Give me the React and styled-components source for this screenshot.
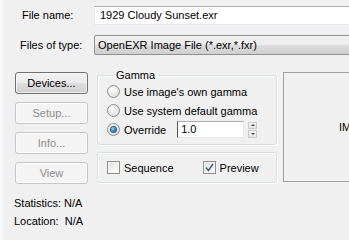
import React from 'react';
import styled, { createGlobalStyle } from 'styled-components';

const GlobalStyle = createGlobalStyle`
  html, body {
    margin: 0;
    padding: 0;
    background: #f0f0f0;
  }
  body {
    font-family: "Liberation Sans", Arial, sans-serif;
    font-size: 11px;
    color: #000;
  }
`;

const Page = styled.div`
  width: 346px;
  height: 240px;
  overflow: hidden;
  background: #f0f0f0;
  border-left: 3px solid #f7f9fc;
  display: flex;
  flex-direction: column;
`;

const FieldGrid = styled.div`
  display: grid;
  grid-template-columns: 91px 280px;
  row-gap: 10px;
  padding-top: 6px;
  align-items: center;
`;

const Label = styled.label`
  padding-left: ${p => p.$indent}px;
  white-space: nowrap;
  line-height: 19px;
`;

const TextInput = styled.div`
  height: 17px;
  border: 1px solid #e3e9ef;
  border-top-color: #abadb3;
  background: #fff;
  padding-left: 5px;
  line-height: 17px;
  white-space: nowrap;
`;

const Combo = styled.div`
  height: 18px;
  border: 1px solid #8e8f8f;
  border-radius: 2px;
  background: linear-gradient(#f2f2f2 0%, #ebebeb 50%, #dddddd 51%, #cfcfcf 100%);
  padding-left: 3px;
  line-height: 18px;
  white-space: nowrap;
`;

const Middle = styled.div`
  display: flex;
  align-items: flex-start;
  margin-top: 14px;
  padding-left: 12px;
`;

const ButtonColumn = styled.div`
  display: flex;
  flex-direction: column;
  gap: 8px;
  margin-top: 3px;
  width: 73px;
  flex-shrink: 0;
`;

const Button = styled.div`
  height: 20px;
  box-sizing: content-box;
  border: 1px solid ${p => (p.$disabled ? '#c4c7c9' : '#707070')};
  border-radius: 3px;
  background: ${p =>
    p.$disabled
      ? '#f4f4f4'
      : 'linear-gradient(#f2f2f2 0%, #ebebeb 50%, #dddddd 51%, #cfcfcf 100%)'};
  color: ${p => (p.$disabled ? '#8d8d8d' : '#000')};
  display: flex;
  align-items: center;
  justify-content: center;
  box-shadow: inset 0 0 0 1px ${p => (p.$disabled ? '#fbfbfb' : 'rgba(255,255,255,0.6)')};
`;

const GroupColumn = styled.div`
  display: flex;
  flex-direction: column;
  gap: 7px;
  margin-left: 9px;
  width: 180px;
  flex-shrink: 0;
`;

const Group = styled.fieldset`
  margin: 0;
  border: 1px solid #d5dfe5;
  border-radius: 3px;
  box-shadow: inset 1px 1px 0 #fff, 1px 1px 0 #fff;
  padding: ${p => p.$pad};
  min-width: 0;
  display: flex;
  flex-direction: ${p => (p.$row ? 'row' : 'column')};
  gap: ${p => p.$gap || 0}px;
`;

const Legend = styled.legend`
  padding: 0 3px;
  margin-left: 6px;
  line-height: 13px;
`;

const OptionRow = styled.div`
  display: flex;
  align-items: center;
  height: 19px;
  gap: 4px;
  white-space: nowrap;
`;

const RadioDot = styled.span`
  width: 11px;
  height: 11px;
  border-radius: 50%;
  border: 1px solid #8e8f8f;
  background: radial-gradient(circle at 40% 35%, #ffffff 0%, #e8e8e8 55%, #d0d0d0 100%);
  display: flex;
  align-items: center;
  justify-content: center;
  flex-shrink: 0;

  &::after {
    content: '';
    display: ${p => (p.$checked ? 'block' : 'none')};
    width: 5px;
    height: 5px;
    border-radius: 50%;
    background: radial-gradient(circle at 35% 35%, #8fd2f5 0%, #1f6aa0 70%, #0e3f70 100%);
    box-shadow: 0 0 0 1px #2a5b86;
  }
`;

const Check = styled.span`
  width: 11px;
  height: 11px;
  border: 1px solid #8e8f8f;
  background: linear-gradient(135deg, #dcdcdc 0%, #f4f4f4 60%, #ffffff 100%);
  box-shadow: inset 0 0 0 1px #f4f4f4;
  display: flex;
  align-items: center;
  justify-content: center;
  flex-shrink: 0;
`;

const OverrideInput = styled.div`
  width: 62px;
  height: 15px;
  margin-left: 7px;
  border: 1px solid #e3e9ef;
  border-top-color: #abadb3;
  border-left-color: #555;
  background: #fff;
  padding-left: 3px;
  line-height: 15px;
`;

const Spinner = styled.div`
  width: 9px;
  height: 16px;
  display: flex;
  flex-direction: column;
  gap: 1px;
`;

const SpinHalf = styled.div`
  flex: 1;
  border: 1px solid #c9cbcd;
  background: linear-gradient(#f8f8f8, #e3e3e3);
  display: flex;
  align-items: center;
  justify-content: center;

  &::after {
    content: '';
    border-left: 2px solid transparent;
    border-right: 2px solid transparent;
    ${p => (p.$up ? 'border-bottom' : 'border-top')}: 2px solid #444;
  }
`;

const PreviewPanel = styled.div`
  margin-left: 6px;
  margin-top: 3px;
  width: 80px;
  height: 108px;
  flex-shrink: 0;
  border: 1px solid #a0a0a0;
  display: flex;
  align-items: center;
  padding-left: 55px;
  white-space: nowrap;
`;

const Stats = styled.div`
  display: flex;
  flex-direction: column;
  gap: 5px;
  margin-top: 13px;
  padding-left: 11px;
  line-height: 13px;
`;

function Radio({ checked, children }) {
  return (
    <OptionRow>
      <RadioDot $checked={checked} />
      {children}
    </OptionRow>
  );
}

function CheckBox({ checked, children }) {
  return (
    <OptionRow>
      <Check>
        {checked && (
          <svg width="9" height="9" viewBox="0 0 9 9">
            <path d="M1 4.5 L3.5 7.5 L8 1" fill="none" stroke="#4a5f97" strokeWidth="1.6" />
          </svg>
        )}
      </Check>
      {children}
    </OptionRow>
  );
}

export default function App() {
  return (
    <Page>
      <GlobalStyle />
      <FieldGrid>
        <Label $indent={19}>File name:</Label>
        <TextInput>1929 Cloudy Sunset.exr</TextInput>
        <Label $indent={17}>Files of type:</Label>
        <Combo>OpenEXR Image File (*.exr,*.fxr)</Combo>
      </FieldGrid>

      <Middle>
        <ButtonColumn>
          <Button>Devices...</Button>
          <Button $disabled>Setup...</Button>
          <Button $disabled>Info...</Button>
          <Button $disabled>View</Button>
        </ButtonColumn>

        <GroupColumn>
          <Group $pad="0 6px 5px 9px">
            <Legend>Gamma</Legend>
            <Radio>Use image's own gamma</Radio>
            <Radio>Use system default gamma</Radio>
            <OptionRow>
              <RadioDot $checked />
              Override
              <OverrideInput>1.0</OverrideInput>
              <Spinner>
                <SpinHalf $up />
                <SpinHalf />
              </Spinner>
            </OptionRow>
          </Group>
          <Group $row $gap={29} $pad="5px 6px 5px 9px">
            <CheckBox>Sequence</CheckBox>
            <CheckBox checked>Preview</CheckBox>
          </Group>
        </GroupColumn>

        <PreviewPanel>IMAGE</PreviewPanel>
      </Middle>

      <Stats>
        <div>Statistics: N/A</div>
        <div>Location:&nbsp; N/A</div>
      </Stats>
    </Page>
  );
}
